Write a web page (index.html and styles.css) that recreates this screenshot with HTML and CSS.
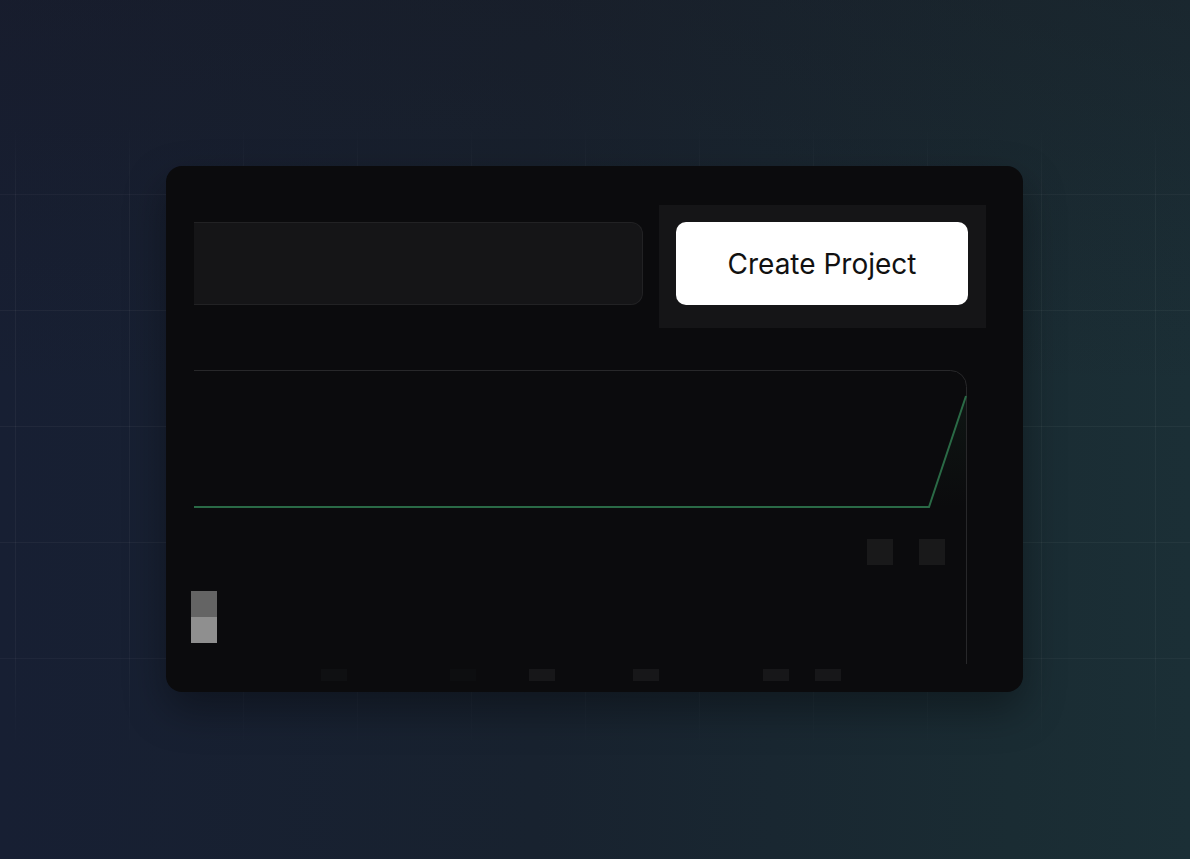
FILE: index.html
```html
<!DOCTYPE html>
<html lang="en">
<head>
    <meta charset="UTF-8">
    <meta name="viewport" content="width=device-width, initial-scale=1.0">
    <title>Create Project</title>
    <link rel="stylesheet" href="styles.css">
</head>
<body>
    <div class="grid-bg"></div>

    <div class="card">
        <div class="toolbar">
            <div class="search-field"></div>
            <div class="action-panel">
                <button class="create-btn">Create Project</button>
            </div>
        </div>

        <div class="chart">
            <svg width="857" height="322" viewBox="0 0 857 322">
                <defs>
                    <linearGradient id="slopeFill" x1="0" y1="0" x2="0" y2="1">
                        <stop offset="0" stop-color="#2a6644" stop-opacity="0.12"/>
                        <stop offset="1" stop-color="#2a6644" stop-opacity="0"/>
                    </linearGradient>
                </defs>

                <!-- frame -->
                <path d="M28 0.5 H784.5 A16 16 0 0 1 800.5 16.5 V294" fill="none" stroke="#28282a" stroke-width="1"/>

                <!-- line -->
                <polygon points="763,137 800,26 800,137" fill="url(#slopeFill)"/>
                <polyline points="28,137 763,137 800,26" fill="none" stroke="#2a6a46" stroke-width="2"/>

                <!-- markers -->
                <rect x="701" y="169" width="26" height="26" fill="#19191a"/>
                <rect x="753" y="169" width="26" height="26" fill="#19191a"/>

                <!-- legend -->
                <rect x="25" y="221" width="26" height="26" fill="#646464"/>
                <rect x="25" y="247" width="26" height="26" fill="#8f8f8f"/>

                <!-- axis ticks -->
                <rect x="155" y="299" width="26" height="12" fill="#0f1012"/>
                <rect x="284" y="299" width="26" height="12" fill="#0d0e10"/>
                <rect x="363" y="299" width="26" height="12" fill="#171719"/>
                <rect x="467" y="299" width="26" height="12" fill="#171719"/>
                <rect x="597" y="299" width="26" height="12" fill="#171719"/>
                <rect x="649" y="299" width="26" height="12" fill="#171719"/>
            </svg>
        </div>
    </div>
</body>
</html>
```

FILE: styles.css
```css
html, body {
    height: 100%;
}

body {
    margin: 0;
    box-sizing: border-box;
    padding: 0 1px 1px 0;
    display: flex;
    align-items: center;
    justify-content: center;
    font-family: Inter, "Noto Sans", sans-serif;
    background:
        linear-gradient(to bottom, rgba(24, 24, 34, 0.35), rgba(24, 24, 34, 0) 45%),
        linear-gradient(90deg, #171f33 0%, #18222f 45%, #1a2c33 85%, #1b2f36 100%);
    overflow: hidden;
}

.grid-bg {
    position: fixed;
    inset: 0;
    background-image:
        linear-gradient(to right, rgba(255, 255, 255, 0.045) 1px, transparent 1px),
        linear-gradient(to bottom, rgba(255, 255, 255, 0.045) 1px, transparent 1px);
    background-size: 114px 116px;
    background-position: 15px 194px;
    -webkit-mask-image: linear-gradient(to bottom, transparent 14%, #000 24%, #000 74%, transparent 88%);
    mask-image: linear-gradient(to bottom, transparent 14%, #000 24%, #000 74%, transparent 88%);
}

.card {
    position: relative;
    width: 857px;
    height: 526px;
    box-sizing: border-box;
    padding-top: 39px;
    background: #0b0b0d;
    border-radius: 16px;
    box-shadow: 0 18px 40px rgba(0, 0, 0, 0.35);
    overflow: hidden;
}

.toolbar {
    display: flex;
    align-items: flex-start;
    padding-left: 28px;
}

.search-field {
    width: 449px;
    height: 83px;
    margin-top: 17px;
    margin-right: 16px;
    box-sizing: border-box;
    background: #151517;
    border: 1px solid #222224;
    border-left: none;
    border-radius: 0 12px 12px 0;
}

.action-panel {
    width: 327px;
    height: 123px;
    box-sizing: border-box;
    padding: 17px 18px 23px 17px;
    background: #151517;
}

.create-btn {
    display: block;
    width: 292px;
    height: 83px;
    border: none;
    border-radius: 10px;
    background: #ffffff;
    color: #111111;
    font-family: Inter, "Noto Sans", sans-serif;
    font-size: 28px;
    font-weight: 400;
    cursor: pointer;
}

.chart {
    margin-top: 42px;
}

.chart svg {
    display: block;
}
```
